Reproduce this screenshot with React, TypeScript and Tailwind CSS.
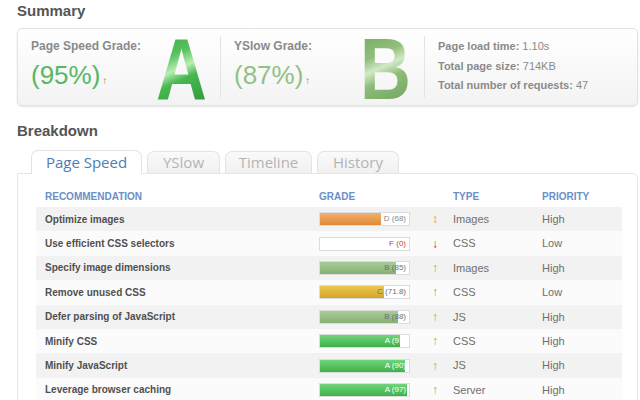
const rows = [
  { name: 'Optimize images', grade: 'D (68)', fill: 68, bar: 'bg-[linear-gradient(#f0b070,#e08a35)]', label: 'text-[#8a8a8a]', arrow: '↕', arrowColor: 'text-[#e8a040]', type: 'Images', priority: 'High' },
  { name: 'Use efficient CSS selectors', grade: 'F (0)', fill: 0, bar: '', label: 'text-[#d04040]', arrow: '↓', arrowColor: 'text-[#d03030]', type: 'CSS', priority: 'Low' },
  { name: 'Specify image dimensions', grade: 'B (85)', fill: 85, bar: 'bg-[linear-gradient(#a8cc98,#86b073)]', label: 'text-[#707070]', arrow: '↑', arrowColor: 'text-[#aaa266]', type: 'Images', priority: 'High' },
  { name: 'Remove unused CSS', grade: 'C (71.8)', fill: 72, bar: 'bg-[linear-gradient(#ecc850,#d4a528)]', label: 'text-[#707070]', arrow: '↑', arrowColor: 'text-[#aaa266]', type: 'CSS', priority: 'Low' },
  { name: 'Defer parsing of JavaScript', grade: 'B (88)', fill: 88, bar: 'bg-[linear-gradient(#a8cc98,#86b073)]', label: 'text-[#707070]', arrow: '↑', arrowColor: 'text-[#aaa266]', type: 'JS', priority: 'High' },
  { name: 'Minify CSS', grade: 'A (91)', fill: 90, bar: 'bg-[linear-gradient(#6fd67a,#3fb04c)]', label: 'text-white', arrow: '↑', arrowColor: 'text-[#aaa266]', type: 'CSS', priority: 'High' },
  { name: 'Minify JavaScript', grade: 'A (90)', fill: 95, bar: 'bg-[linear-gradient(#6fd67a,#3fb04c)]', label: 'text-white', arrow: '↑', arrowColor: 'text-[#aaa266]', type: 'JS', priority: 'High' },
  { name: 'Leverage browser caching', grade: 'A (97)', fill: 98, bar: 'bg-[linear-gradient(#6fd67a,#3fb04c)]', label: 'text-white', arrow: '↑', arrowColor: 'text-[#aaa266]', type: 'Server', priority: 'High' },
];

const tabs = [
  { name: 'YSlow', w: 'w-[73px]' },
  { name: 'Timeline', w: 'w-[87px]' },
  { name: 'History', w: 'w-[82px]' },
];

function GradeBar({ r }: { r: (typeof rows)[number] }) {
  return (
    <div className="relative h-[14px] w-[91px] border border-[#dcdcdc] bg-white">
      {r.fill > 0 && <div className={`h-full ${r.bar}`} style={{ width: `${r.fill}%` }} />}
      <span className={`absolute right-[3px] top-0 text-[8px] leading-[12px] ${r.label}`}>{r.grade}</span>
    </div>
  );
}

export default function App() {
  return (
    <div className="h-[400px] w-[640px] overflow-hidden bg-white pl-[17px] pr-[2px] font-['Liberation_Sans',Arial,sans-serif]">
      <h2 className="pt-[1px] text-[15px] font-bold leading-[20px] text-[#555]">Summary</h2>

      {/* summary box */}
      <div className="mt-[7px] flex h-[78px] rounded-[5px] border border-[#e2e2e2] bg-[linear-gradient(#ffffff,#f3f3f3)] shadow-[0_1px_2px_rgba(0,0,0,0.1)]">
        <div className="flex w-[202px] pl-[13px]">
          <div className="w-[126px] pt-[10px]">
            <div className="text-[12px] font-bold leading-[14px] text-[#8a8a8a]">Page Speed Grade:</div>
            <div className="mt-[7px] text-[26px] leading-[30px] text-[#56b863]">
              (95%)<span className="ml-[2px] text-[10px] text-[#b86a3a]">↑</span>
            </div>
          </div>
          <div className="pt-[8px]">
            <div className="origin-left scale-x-[0.8] bg-[linear-gradient(160deg,#3aa847_0%,#59c25f_30%,#b8eeb3_48%,#48b850_62%,#2f9b3c_100%)] bg-clip-text text-[88px] font-bold leading-[64px] text-transparent">
              A
            </div>
          </div>
        </div>
        <div className="my-[7px] w-px bg-[#e4e4e4]" />
        <div className="flex w-[203px] pl-[13px]">
          <div className="w-[126px] pt-[10px]">
            <div className="text-[12px] font-bold leading-[14px] text-[#8a8a8a]">YSlow Grade:</div>
            <div className="mt-[7px] text-[26px] leading-[30px] text-[#92c184]">
              (87%)<span className="ml-[2px] text-[10px] text-[#b86a3a]">↑</span>
            </div>
          </div>
          <div className="pt-[8px]">
            <div className="origin-left scale-x-[0.8] bg-[linear-gradient(160deg,#7aad66_0%,#90bf7c_30%,#d2e8c6_46%,#8cbc78_62%,#72a45f_100%)] bg-clip-text text-[88px] font-bold leading-[64px] text-transparent">
              B
            </div>
          </div>
        </div>
        <div className="my-[7px] w-px bg-[#e4e4e4]" />
        <div className="flex-1 pl-[13px] pt-[8px] text-[11px] leading-[19.5px] text-[#8a8a8a]">
          <div><b>Page load time:</b> 1.10s</div>
          <div><b>Total page size:</b> 714KB</div>
          <div><b>Total number of requests:</b> 47</div>
        </div>
      </div>

      <h2 className="mt-[15px] text-[15px] font-bold leading-[20px] text-[#555]">Breakdown</h2>

      {/* tabs */}
      <div className="mt-[9px] flex items-end gap-[5px] pl-[14px] font-['Open_Sans',sans-serif]">
        <div className="relative z-10 -mb-px flex h-[24px] w-[111px] items-center justify-center rounded-t-[7px] border border-b-0 border-[#e2e2e2] bg-white text-[15px] font-medium text-[#4d7db6]">
          Page Speed
        </div>
        {tabs.map((t) => (
          <div
            key={t.name}
            className={`flex h-[22px] ${t.w} items-center justify-center rounded-t-[7px] border border-b-0 border-[#e4e4e4] bg-[linear-gradient(#fafafa,#f0f0f0)] text-[15px] text-[#b4b4b4]`}
          >
            {t.name}
          </div>
        ))}
      </div>

      {/* breakdown table */}
      <div className="h-[260px] rounded-tr-[5px] border border-[#e6e6e6] pl-[18px] pr-[15px] pt-[12px]">
        <div className="grid h-[21px] grid-cols-[274px_113px_21px_89px_1fr] items-center pl-[9px] text-[10px] font-bold text-[#6b8fc6]">
          <span>RECOMMENDATION</span>
          <span>GRADE</span>
          <span />
          <span>TYPE</span>
          <span>PRIORITY</span>
        </div>
        {rows.map((r, i) => (
          <div
            key={r.name}
            className={`grid h-[24.4px] grid-cols-[274px_113px_21px_89px_1fr] items-center pl-[9px] ${i % 2 === 0 ? 'bg-[#f2f2f2]' : 'bg-[#fbfbfb]'}`}
          >
            <span className="text-[10px] font-bold text-[#505050]">{r.name}</span>
            <GradeBar r={r} />
            <span className={`text-[12px] font-bold ${r.arrowColor}`}>{r.arrow}</span>
            <span className="text-[11px] text-[#6e6e6e]">{r.type}</span>
            <span className="text-[11px] text-[#6e6e6e]">{r.priority}</span>
          </div>
        ))}
      </div>
    </div>
  );
}
